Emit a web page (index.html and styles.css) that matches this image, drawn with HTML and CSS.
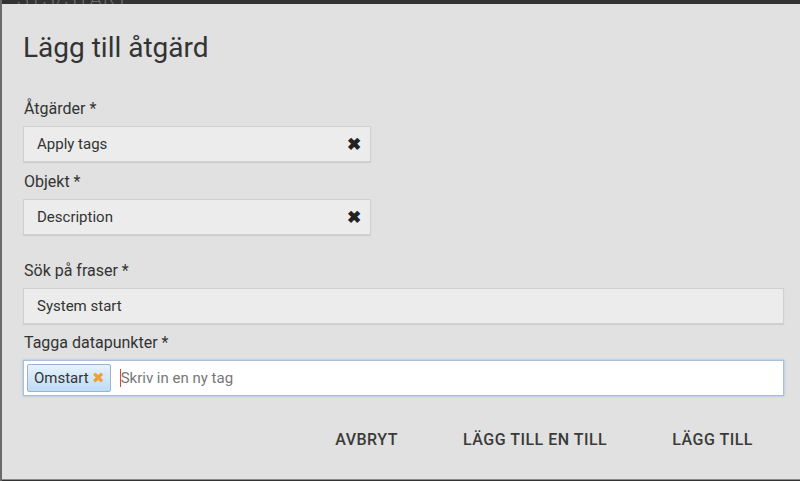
FILE: index.html
```html
<!DOCTYPE html>
<html lang="sv">
<head>
<meta charset="utf-8">
<title>Lägg till åtgärd</title>
<link rel="stylesheet" href="styles.css">
</head>
<body>
<div class="backdrop">
  <div class="behind">SYS/START</div>
  <div class="modal">
    <h1 class="title">Lägg till åtgärd</h1>
    <div class="field">
      <label class="label">Åtgärder *</label>
      <div class="select short"><span>Apply tags</span><span class="clear">✖</span></div>
    </div>
    <div class="field">
      <label class="label first">Objekt *</label>
      <div class="select short"><span>Description</span><span class="clear">✖</span></div>
    </div>
    <div class="field gap-top">
      <label class="label">Sök på fraser *</label>
      <div class="select"><span>System start</span></div>
    </div>
    <div class="field">
      <label class="label">Tagga datapunkter *</label>
      <div class="tags">
        <span class="tag">Omstart <span class="tag-x">✖</span></span>
        <span class="caret"></span>
        <span class="placeholder">Skriv in en ny tag</span>
      </div>
    </div>
    <div class="actions">
      <button class="btn">AVBRYT</button>
      <button class="btn">LÄGG TILL EN TILL</button>
      <button class="btn">LÄGG TILL</button>
    </div>
  </div>
</div>
</body>
</html>
```
FILE: styles.css
```css
html, body {
  margin: 0;
  padding: 0;
  height: 100%;
  overflow: hidden;
  background: #333;
  font-family: Roboto, "Liberation Sans", sans-serif;
  color: #333;
}
.backdrop {
  position: relative;
  height: 481px;
  padding: 4px 0 0 2px;
  box-sizing: border-box;
  background: linear-gradient(to right, #6a6a6a 0, #6a6a6a 2px, transparent 2px), #333;
}
.behind {
  position: absolute;
  left: 17px;
  top: -11px;
  font-size: 20px;
  font-weight: 300;
  letter-spacing: 1px;
  color: #6e6e6e;
  line-height: 20px;
}
.modal {
  position: relative;
  background: #e0e1e0;
  height: 476px;
  box-sizing: border-box;
  padding: 0 16px 0 21px;
  border-bottom: 1px solid #8a8a8a;
}
.title {
  margin: 0 0 26px;
  padding-top: 28px;
  font-size: 28px;
  font-weight: 400;
  line-height: 32px;
  color: #333;
}
.field {
  display: flex;
  flex-direction: column;
}
.label {
  display: block;
  font-size: 16px;
  line-height: 20px;
  padding: 9px 0 7px 1px;
  color: #333;
}
.label.first { padding-top: 10px; }
.gap-top { margin-top: 17px; }
.select {
  display: flex;
  align-items: center;
  justify-content: space-between;
  height: 36px;
  box-sizing: border-box;
  background: #ebeceb;
  border: 1px solid #cfd0cf;
  box-shadow: 0 1px 1px rgba(0,0,0,0.08);
  padding: 0 9px 0 13px;
  font-size: 15px;
  color: #333;
}
.select.short { width: 348px; }
.clear {
  font-size: 17px;
  font-weight: bold;
  color: #222;
  line-height: 1;
}
.tags {
  display: flex;
  align-items: center;
  height: 36px;
  box-sizing: border-box;
  background: #fff;
  border: 1px solid #a9bfdc;
  box-shadow: 0 0 2px rgba(100,150,220,0.6);
  padding: 0 3px;
  font-size: 15px;
}
.tag {
  display: inline-flex;
  align-items: center;
  height: 28px;
  box-sizing: border-box;
  padding: 0 5px 0 6px;
  border: 1px solid #9db3c9;
  border-radius: 2px;
  background: linear-gradient(#e6f2fc, #bcdcf6);
  color: #333;
  font-size: 15px;
}
.tag-x {
  margin-left: 3px;
  color: #f0a030;
  font-size: 15px;
  line-height: 1;
}
.caret {
  width: 1px;
  height: 18px;
  background: #e04040;
  margin-left: 9px;
}
.placeholder {
  color: #777;
}
.actions {
  display: flex;
  justify-content: flex-end;
  margin-top: 24px;
  padding-right: 31px;
  gap: 65px;
}
.btn {
  background: none;
  border: none;
  font-family: Roboto, "Liberation Sans", sans-serif;
  font-size: 16px;
  font-weight: 500;
  letter-spacing: 0.5px;
  line-height: 19px;
  color: #3a3a3a;
  padding: 10px 0;
  margin: 0;
}
```
